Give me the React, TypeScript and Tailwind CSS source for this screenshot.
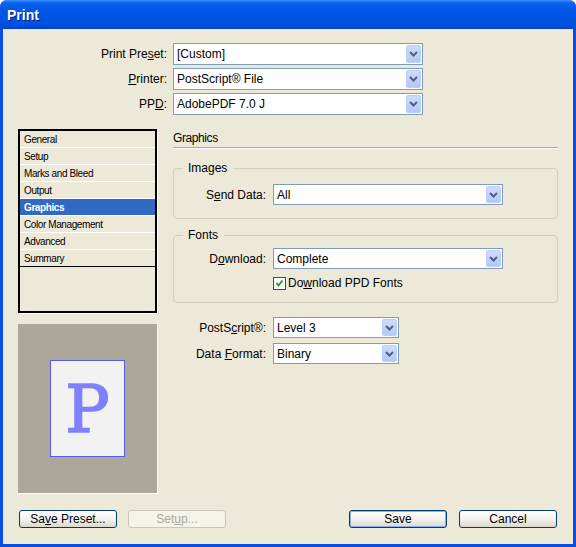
import React from "react";

type ComboProps = {
  value: string;
  className: string;
};

const Chevron = () => (
  <svg width="9" height="6" viewBox="0 0 9 6">
    <polyline points="1,1 4.5,4.5 8,1" fill="none" stroke="#4d6185" strokeWidth="2" />
  </svg>
);

const Combo = ({ value, className }: ComboProps) => (
  <div className={`flex items-stretch border border-[#7f9db9] bg-white ${className}`}>
    <span className="flex flex-1 items-center truncate pl-[3px]">{value}</span>
    <div className="m-px flex w-[15px] items-center justify-center rounded-[2px] border border-[#bccff7] bg-gradient-to-b from-[#cddbfd] to-[#b5c9f7]">
      <Chevron />
    </div>
  </div>
);

const items = [
  "General",
  "Setup",
  "Marks and Bleed",
  "Output",
  "Graphics",
  "Color Management",
  "Advanced",
  "Summary",
];

const XpButton = ({
  children,
  primary,
  disabled,
}: {
  children: React.ReactNode;
  primary?: boolean;
  disabled?: boolean;
}) => {
  if (disabled) {
    return (
      <div className="flex h-[18px] w-[98px] items-center justify-center rounded-[3px] border border-[#c9c7ba] bg-[#f5f4ea] text-[#aca899]">
        {children}
      </div>
    );
  }
  return (
    <div
      className={`flex h-[18px] w-[98px] items-center justify-center rounded-[3px] border border-[#003c74] bg-gradient-to-b from-white via-[#f4f3ee] to-[#dcd8cc] ${
        primary ? "shadow-[inset_0_0_0_1px_#8eb0ee]" : ""
      }`}
    >
      {children}
    </div>
  );
};

export default function App() {
  return (
    <div className="flex h-[547px] w-[576px] flex-col overflow-hidden rounded-t-[7px] bg-[#0a4fe2] font-['Liberation_Sans',Arial,sans-serif] text-[12px] text-black">
      {/* Title bar */}
      <div className="flex h-[29px] shrink-0 items-center bg-[linear-gradient(to_bottom,#3d95ff_0%,#0a62f0_10%,#0056e6_40%,#0053e2_80%,#0042cc_100%)] pl-[7px] pt-[2px] text-[14px] font-bold text-white [text-shadow:1px_1px_0_#0a1883]">
        Print
      </div>

      {/* Body */}
      <div className="mx-[3px] mb-[3px] flex flex-1 flex-col bg-[#ece9d8]">
        {/* Preset / printer / PPD */}
        <div className="mt-[14px] flex flex-col gap-[3px]">
          <div className="flex items-center gap-[6px]">
            <span className="w-[164px] text-right">
              Print Pre<u>s</u>et:
            </span>
            <Combo value="[Custom]" className="h-[22px] w-[250px]" />
          </div>
          <div className="flex items-center gap-[6px]">
            <span className="w-[164px] text-right">
              <u>P</u>rinter:
            </span>
            <Combo value="PostScript® File" className="h-[22px] w-[250px]" />
          </div>
          <div className="flex items-center gap-[6px]">
            <span className="w-[164px] text-right">
              PP<u>D</u>:
            </span>
            <Combo value="AdobePDF 7.0 J" className="h-[22px] w-[250px]" />
          </div>
        </div>

        {/* Middle */}
        <div className="mt-[14px] flex gap-[16px] pl-[15px]">
          {/* Left column */}
          <div className="flex w-[139px] flex-col">
            <div className="h-[184px] border-2 border-black shadow-[1px_1px_0_#fff]">
              {items.map((it, i) => (
                <div
                  key={it}
                  className={`flex h-[17px] items-center border-b pl-[4px] text-[10px] tracking-[-0.4px] ${
                    i === items.length - 1 ? "border-black" : "border-white"
                  } ${it === "Graphics" ? "bg-[#316ac5] font-bold text-white" : ""}`}
                >
                  {it}
                </div>
              ))}
            </div>
            <div className="mt-[11px] flex h-[169px] items-center justify-center bg-[#aca899] shadow-[1px_1px_0_#fff]">
              <div className="flex h-[97px] w-[75px] items-center justify-center border border-[#5a5af0] bg-[#f2f2f2]">
                <span className="pt-[2px] font-['DejaVu_Serif',serif] text-[66px] leading-none text-[#8080ff] [-webkit-text-stroke:1.5px_#8080ff]">
                  P
                </span>
              </div>
            </div>
          </div>

          {/* Right column */}
          <div className="flex w-[385px] flex-col">
            <div className="h-[19px] border-b border-[#aca899] leading-[18px] tracking-[-0.4px]">
              Graphics
            </div>
            <div className="h-px bg-white" />

            <fieldset className="mt-[13px] rounded-[4px] border border-[#d0d0bf] pb-[13px]">
              <legend className="ml-[9px] pl-[5px] pr-[6px] leading-[13px]">Images</legend>
              <div className="mt-[9px] flex items-center gap-[7px]">
                <span className="w-[92px] text-right">
                  S<u>e</u>nd Data:
                </span>
                <Combo value="All" className="h-[21px] w-[230px]" />
              </div>
            </fieldset>

            <fieldset className="mt-[10px] rounded-[4px] border border-[#d0d0bf] pb-[12px]">
              <legend className="ml-[9px] pl-[5px] pr-[6px] leading-[13px]">Fonts</legend>
              <div className="mt-[6px] flex items-center gap-[7px]">
                <span className="w-[92px] text-right">
                  D<u>o</u>wnload:
                </span>
                <Combo value="Complete" className="h-[21px] w-[230px]" />
              </div>
              <div className="ml-[99px] mt-[8px] flex items-center gap-[2px]">
                <div className="flex h-[13px] w-[13px] items-center justify-center border border-[#1c5180] bg-white">
                  <svg width="9" height="9" viewBox="0 0 9 9">
                    <polyline
                      points="1.5,4 3.5,6.5 7.5,1.5"
                      fill="none"
                      stroke="#21a121"
                      strokeWidth="2"
                    />
                  </svg>
                </div>
                <span className="leading-[13px]">
                  Do<u>w</u>nload PPD Fonts
                </span>
              </div>
            </fieldset>

            <div className="mt-[14px] flex flex-col gap-[5px]">
              <div className="flex items-center gap-[7px]">
                <span className="w-[93px] text-right">
                  PostS<u>c</u>ript®:
                </span>
                <Combo value="Level 3" className="h-[21px] w-[126px]" />
              </div>
              <div className="flex items-center gap-[7px]">
                <span className="w-[93px] text-right">
                  Data <u>F</u>ormat:
                </span>
                <Combo value="Binary" className="h-[21px] w-[126px]" />
              </div>
            </div>
          </div>
        </div>

        {/* Buttons */}
        <div className="mt-[17px] flex items-center justify-between px-[16px]">
          <div className="flex gap-[11px]">
            <XpButton>
              Sa<u>v</u>e Preset...
            </XpButton>
            <XpButton disabled>
              Set<u>u</u>p...
            </XpButton>
          </div>
          <div className="flex gap-[12px]">
            <XpButton primary>Save</XpButton>
            <XpButton>Cancel</XpButton>
          </div>
        </div>
      </div>
    </div>
  );
}
